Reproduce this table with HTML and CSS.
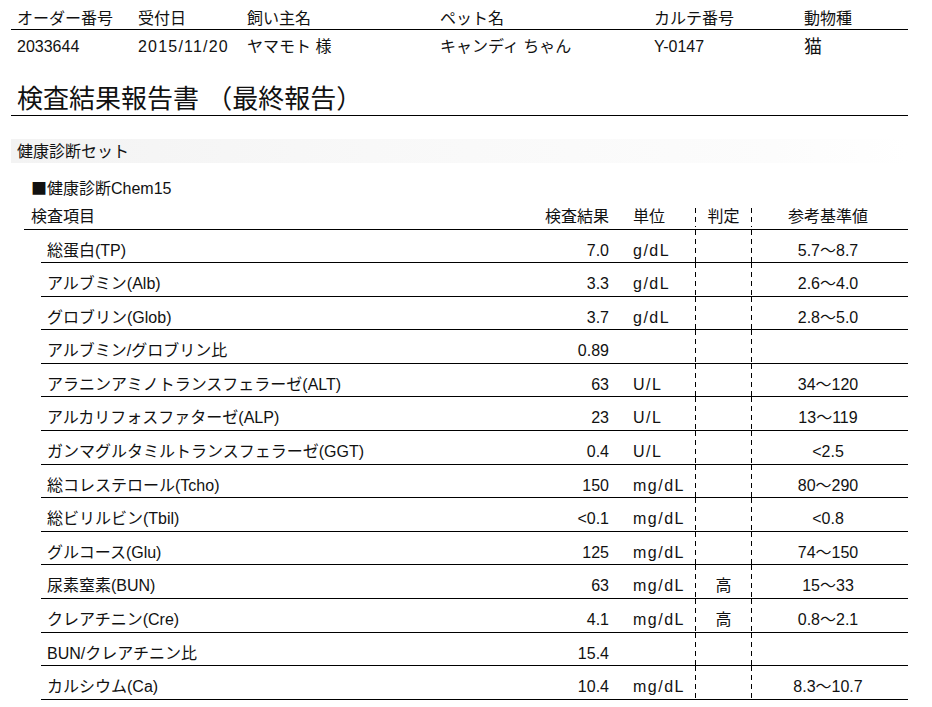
FILE: index.html
```html
<!DOCTYPE html>
<html lang="ja">
<head>
<meta charset="utf-8">
<title>検査結果報告書</title>
<link rel="stylesheet" href="styles.css">
</head>
<body>
<div class="page">
  <div class="info info-head">
    <div>オーダー番号</div><div>受付日</div><div>飼い主名</div><div>ペット名</div><div>カルテ番号</div><div>動物種</div>
  </div>
  <div class="info info-vals">
    <div>2033644</div><div class="wide">2015/11/20</div><div>ヤマモト 様</div><div>キャンディ ちゃん</div><div>Y-0147</div><div class="species">猫</div>
  </div>
  <h1 class="title">検査結果報告書 （最終報告）</h1>
  <div class="set">健康診断セット</div>
  <div class="panel"><span class="square">■</span>健康診断Chem15</div>
  <div class="table">
    <div class="row head">
      <div class="item">検査項目</div><div class="res">検査結果</div><div class="unit">単位</div><div class="judge">判定</div><div class="range">参考基準値</div>
    </div>
    <div class="row"><div class="item">総蛋白(TP)</div><div class="res">7.0</div><div class="unit">g/dL</div><div class="judge"></div><div class="range">5.7〜8.7</div></div>
    <div class="row"><div class="item">アルブミン(Alb)</div><div class="res">3.3</div><div class="unit">g/dL</div><div class="judge"></div><div class="range">2.6〜4.0</div></div>
    <div class="row"><div class="item">グロブリン(Glob)</div><div class="res">3.7</div><div class="unit">g/dL</div><div class="judge"></div><div class="range">2.8〜5.0</div></div>
    <div class="row"><div class="item">アルブミン/グロブリン比</div><div class="res">0.89</div><div class="unit"></div><div class="judge"></div><div class="range"></div></div>
    <div class="row"><div class="item">アラニンアミノトランスフェラーゼ(ALT)</div><div class="res">63</div><div class="unit">U/L</div><div class="judge"></div><div class="range">34〜120</div></div>
    <div class="row"><div class="item">アルカリフォスファターゼ(ALP)</div><div class="res">23</div><div class="unit">U/L</div><div class="judge"></div><div class="range">13〜119</div></div>
    <div class="row"><div class="item">ガンマグルタミルトランスフェラーゼ(GGT)</div><div class="res">0.4</div><div class="unit">U/L</div><div class="judge"></div><div class="range">&lt;2.5</div></div>
    <div class="row"><div class="item">総コレステロール(Tcho)</div><div class="res">150</div><div class="unit">mg/dL</div><div class="judge"></div><div class="range">80〜290</div></div>
    <div class="row"><div class="item">総ビリルビン(Tbil)</div><div class="res">&lt;0.1</div><div class="unit">mg/dL</div><div class="judge"></div><div class="range">&lt;0.8</div></div>
    <div class="row"><div class="item">グルコース(Glu)</div><div class="res">125</div><div class="unit">mg/dL</div><div class="judge"></div><div class="range">74〜150</div></div>
    <div class="row"><div class="item">尿素窒素(BUN)</div><div class="res">63</div><div class="unit">mg/dL</div><div class="judge">高</div><div class="range">15〜33</div></div>
    <div class="row"><div class="item">クレアチニン(Cre)</div><div class="res">4.1</div><div class="unit">mg/dL</div><div class="judge">高</div><div class="range">0.8〜2.1</div></div>
    <div class="row"><div class="item">BUN/クレアチニン比</div><div class="res">15.4</div><div class="unit"></div><div class="judge"></div><div class="range"></div></div>
    <div class="row"><div class="item">カルシウム(Ca)</div><div class="res">10.4</div><div class="unit">mg/dL</div><div class="judge"></div><div class="range">8.3〜10.7</div></div>
  </div>
</div>
</body>
</html>
```
FILE: styles.css
```css
html, body {
  margin: 0;
  padding: 0;
  background: #fff;
}
body {
  font-family: "Liberation Sans", "Noto Sans CJK JP", sans-serif;
  font-size: 16px;
  color: #111;
}
.page {
  width: 897px;
  margin-left: 11px;
  padding-top: 9px;
}
.info {
  display: grid;
  grid-template-columns: 121px 109px 193px 214px 150px 1fr;
  padding-left: 6px;
  line-height: 20px;
  height: 20px;
}
.info-head {
  border-bottom: 1px solid #000;
}
.info-vals {
  margin-top: 7px;
}
.wide {
  letter-spacing: 1.2px;
}
.species {
  font-size: 18px;
}
.title {
  margin: 26px 0 0;
  padding: 0 0 0 6px;
  font-size: 26px;
  line-height: 32px;
  height: 32px;
  font-weight: normal;
  border-bottom: 1px solid #000;
}
.set {
  margin-top: 23px;
  height: 24px;
  line-height: 26px;
  padding-left: 6px;
  background: linear-gradient(to right, #f3f3f3 0%, #f8f8f8 40%, #fcfcfc 85%, #ffffff 100%);
}
.panel {
  margin: 14px 0 0 20px;
  line-height: 20px;
  height: 20px;
}
.square {
  font-family: "Noto Sans CJK JP", sans-serif;
}
.table {
  margin-left: 13px;
}
.row {
  display: grid;
  grid-template-columns: 1fr 70px 86px 57px 156px;
  box-sizing: border-box;
  height: 33.6px;
  border-bottom: 1px solid #000;
  line-height: 20px;
  margin-left: 17px;
}
.row.head {
  margin-left: 0;
  height: 32.5px;
}
.row > div {
  padding-top: 11px;
  white-space: nowrap;
}
.row.head > div {
  padding-top: 10px;
}
.item {
  padding-left: 6px;
}
.row.head .item {
  padding-left: 7px;
}
.res {
  text-align: right;
}
.unit {
  padding-left: 24px;
  letter-spacing: 1.5px;
}
.row.head .unit {
  letter-spacing: 0;
}
.judge {
  text-align: center;
  background-image:
    repeating-linear-gradient(to bottom, #000 0, #000 5px, transparent 5px, transparent 9px),
    repeating-linear-gradient(to bottom, #000 0, #000 5px, transparent 5px, transparent 9px);
  background-size: 1px 100%, 1px 100%;
  background-position: left top, right top;
  background-repeat: no-repeat;
}
.row.head .judge {
  background-size: 1px 19px, 1px 19px;
  background-position: left bottom 2px, right bottom 2px;
}
.range {
  text-align: center;
  padding-right: 4px;
}
```
